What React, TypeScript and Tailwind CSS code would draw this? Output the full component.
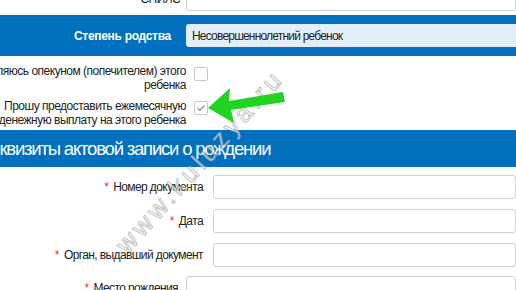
const Star = () => <span className="mr-[5px] text-[#e5322d]">*</span>;

function FieldRow({ label, labelW, gap, top }: { label: string; labelW: number; gap: number; top: number }) {
  return (
    <div className="flex items-center" style={{ marginTop: top }}>
      <label className="shrink-0 whitespace-nowrap text-right text-[12px] leading-none tracking-[-0.6px] text-[#222]" style={{ width: labelW }}>
        <Star />
        {label}
      </label>
      <div className="h-[24px] flex-1 rounded-[3px] border border-[#cdd2d8] bg-white" style={{ marginLeft: gap }} />
    </div>
  );
}

function Check({ checked }: { checked?: boolean }) {
  return (
    <div className="flex h-[14px] w-[14px] items-center justify-center rounded-[2px] border border-[#c4c9cf] bg-white">
      {checked && (
        <svg width="10" height="8" viewBox="0 0 10 8">
          <path d="M1.5 4.2 L3.8 6.3 L8.5 1.5" fill="none" stroke="#9aa0a8" strokeWidth="1.5" />
        </svg>
      )}
    </div>
  );
}

export default function App() {
  return (
    <div className="relative h-[290px] w-[516px] overflow-hidden bg-white font-['Liberation_Sans',Arial,sans-serif] text-[#222]">
      {/* СНИЛС */}
      <div className="-mt-[13px] flex items-center">
        <label className="w-[180px] shrink-0 text-right text-[12px] leading-none tracking-[-0.6px]">
          <Star />
          СНИЛС
        </label>
        <div className="ml-[6px] h-[24px] flex-1 rounded-[3px] border border-[#cdd2d8]" />
      </div>

      {/* Степень родства */}
      <div className="mt-[4px] flex h-[41px] items-center bg-[#0070bf]">
        <div className="w-[171px] shrink-0 text-right text-[12px] font-bold tracking-[-0.3px] text-white">Степень родства</div>
        <div className="ml-[15px] flex h-[23px] flex-1 items-center rounded-l-[3px] bg-[#e4eef8] pl-[6px] text-[12px] tracking-[-0.8px] text-[#222]">
          Несовершеннолетний ребенок
        </div>
      </div>

      {/* чекбоксы */}
      <div className="mt-[8px] flex items-start">
        <div className="w-[186px] shrink-0 whitespace-nowrap text-right text-[12px] leading-[14px] tracking-[-0.5px]">
          <div className="flex justify-end">Являюсь опекуном (попечителем) этого</div>
          <div>ребенка</div>
        </div>
        <div className="ml-[8px] mt-[3px]">
          <Check />
        </div>
      </div>
      <div className="mt-[7px] flex items-start">
        <div className="w-[186px] shrink-0 whitespace-nowrap text-right text-[12px] leading-[14px] tracking-[-0.5px]">
          <div>Прошу предоставить ежемесячную</div>
          <div className="flex justify-end">денежную выплату на этого ребенка</div>
        </div>
        <div className="ml-[8px] mt-[2px]">
          <Check checked />
        </div>
      </div>

      {/* Реквизиты */}
      <div className="mt-[3px] flex h-[37px] items-center bg-[#0070bf]">
        <div className="-ml-[20px] whitespace-nowrap text-[18.5px] tracking-[-1.2px] text-white">Реквизиты актовой записи о рождении</div>
      </div>

      <FieldRow label="Номер документа" labelW={203} gap={10} top={8} />
      <FieldRow label="Дата" labelW={203} gap={10} top={10} />
      <FieldRow label="Орган, выдавший документ" labelW={203} gap={10} top={10} />
      <FieldRow label="Место рождения" labelW={178} gap={8} top={9} />

      {/* водяной знак */}
      <div className="pointer-events-none absolute left-[68px] top-[142px] w-[264px] -rotate-[48deg] whitespace-nowrap text-center text-[26px] tracking-[4px] text-[rgba(255,255,255,0.6)] [-webkit-text-stroke:1px_rgba(140,140,140,0.55)]">
        www.kuluzya.ru
      </div>

      {/* стрелка */}
      <svg className="pointer-events-none absolute left-[205px] top-[84px]" width="90" height="42" viewBox="0 0 90 42">
        <polygon points="3,24 25,4 24,17 78,8 80,18 26,26 29,39" fill="#22d422" />
      </svg>
    </div>
  );
}
